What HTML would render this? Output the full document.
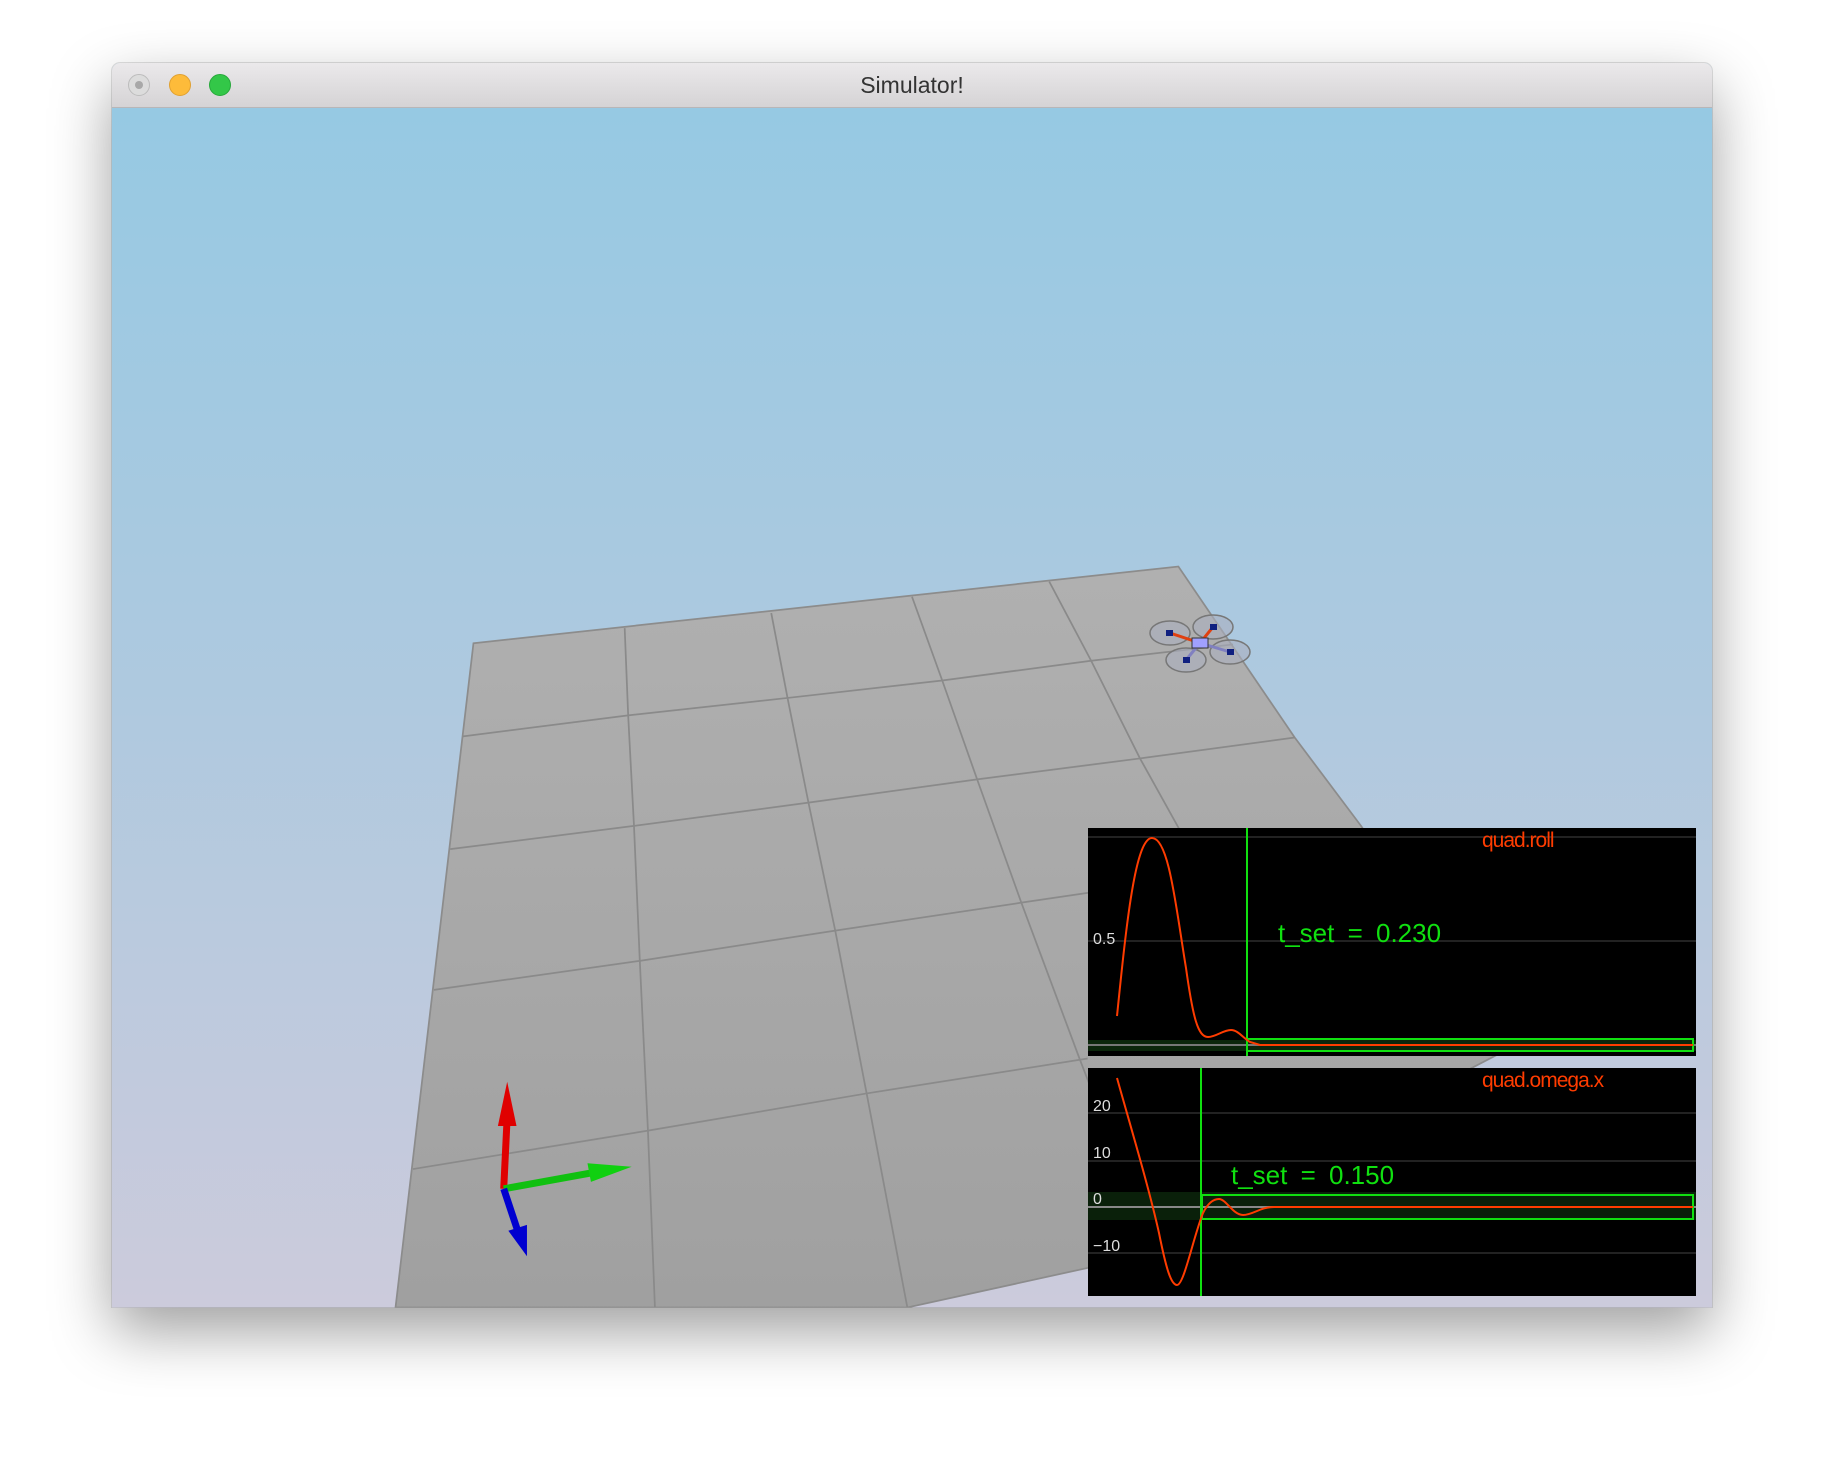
<!DOCTYPE html>
<html><head><meta charset="utf-8"><style>
html,body{margin:0;padding:0;width:1824px;height:1468px;background:#fff;overflow:hidden;font-family:"Liberation Sans",sans-serif}
.win{position:absolute;left:112px;top:63px;width:1600px;height:1244px;border-radius:8px 8px 0 0;box-shadow:0 24px 60px rgba(0,0,0,0.38),0 0 0 1px rgba(0,0,0,0.12);background:#9cc9e2;overflow:hidden}
.tb{position:absolute;left:0;top:0;width:1600px;height:44px;background:linear-gradient(#ebe9eb,#d5d3d5);border-bottom:1px solid #b8b6b8;text-align:center;line-height:44px;font-size:23px;color:#333}
.b{position:absolute;top:11px;width:22px;height:22px;border-radius:50%}
.chart{position:absolute;background:#000;width:608px;height:228px;overflow:hidden}
.t{position:absolute;font-family:"Liberation Sans",sans-serif;white-space:nowrap}
</style></head><body>
<div class="win"><div class="tb">Simulator!
<div class="b" style="left:16px;background:#dcdcdc;border:1px solid #bcbcbc;width:20px;height:20px"><div style="position:absolute;left:6px;top:6px;width:8px;height:8px;border-radius:50%;background:#a8a8a8"></div></div>
<div class="b" style="left:57px;background:#fdbb3a;border:1px solid #e0a030;width:20px;height:20px"></div>
<div class="b" style="left:97px;background:#33c748;border:1px solid #26a83a;width:20px;height:20px"></div>
</div></div>
<svg style="position:absolute;left:0;top:0" width="1824" height="1468" viewBox="0 0 1568 1262">
<defs>
<linearGradient id="sky" x1="0" y1="0" x2="0" y2="1"><stop offset="0" stop-color="#96c9e3"/><stop offset="0.5" stop-color="#afc9df"/><stop offset="1" stop-color="#cccbdc"/></linearGradient>
<linearGradient id="gr" x1="0" y1="0" x2="0" y2="1"><stop offset="0" stop-color="#b0b0b0"/><stop offset="1" stop-color="#a0a0a0"/></linearGradient>
<clipPath id="c"><rect x="96" y="93" width="1376" height="1031"/></clipPath>
</defs>
<g clip-path="url(#c)">
<rect x="96" y="93" width="1376" height="1031" fill="url(#sky)"/>
<polygon points="407,553 1013,487 1113,634 1170,710 1300,900 935,1090 780,1124 340,1124" fill="url(#gr)" stroke="#8c8c8c" stroke-width="1.5"/>
<g stroke="#8a8a8a" stroke-width="1.5" fill="none">
<polyline points="398,633 540,615 677,600 810,585 938,568 1060,554"/>
<polyline points="387,730 545,710 695,690 840,670 980,652 1113,634"/>
<polyline points="373,851 550,826 718,800 878,776 1000,758"/>
<polyline points="355,1005 557,972 745,940 935,910"/>
<polyline points="537,540 540,615 545,710 550,826 557,972 563,1124"/>
<polyline points="663,527 677,600 695,690 718,800 745,940 780,1124"/>
<polyline points="784,513 810,585 840,670 878,776 928,910 955,980"/>
<polyline points="902,500 938,568 980,652 1040,760"/>
</g>
<g stroke-linecap="butt">
<line x1="433" y1="1022" x2="436" y2="960" stroke="#e00000" stroke-width="6"/>
<polygon points="436,930 444,968 428,968" fill="#e00000"/>
<line x1="433" y1="1022" x2="510" y2="1008" stroke="#10c010" stroke-width="6"/>
<polygon points="543,1003 505,1000 508,1016" fill="#10d010"/>
<line x1="433" y1="1022" x2="445" y2="1058" stroke="#0000d0" stroke-width="6"/>
<polygon points="453,1080 437,1058 453,1053" fill="#0000d0"/>
</g>
</g>
</svg>
<svg style="position:absolute;left:1130px;top:590px" width="150" height="100" viewBox="1130 590 150 100">
<g fill="rgba(170,175,190,0.6)" stroke="#777" stroke-width="1.5">
<ellipse cx="1170" cy="633" rx="20" ry="12"/><ellipse cx="1213" cy="627" rx="20" ry="12"/>
<ellipse cx="1186" cy="660" rx="20" ry="12"/><ellipse cx="1230" cy="652" rx="20" ry="12"/>
</g>
<g stroke="#e04010" stroke-width="3"><line x1="1170" y1="633" x2="1200" y2="643"/><line x1="1213" y1="627" x2="1200" y2="643"/></g>
<g stroke="#8080c0" stroke-width="3"><line x1="1186" y1="660" x2="1200" y2="643"/><line x1="1230" y1="652" x2="1200" y2="643"/></g>
<rect x="1192" y="638" width="16" height="10" fill="#a0a0ff" stroke="#333"/>
<g fill="#102080"><rect x="1166" y="630" width="7" height="6"/><rect x="1210" y="624" width="7" height="6"/><rect x="1183" y="657" width="7" height="6"/><rect x="1227" y="649" width="7" height="6"/></g>
</svg>
<div class="chart" style="left:1088px;top:828px">
<svg width="608" height="228" style="position:absolute;left:0;top:0">
<line x1="0" y1="9" x2="608" y2="9" stroke="#222" stroke-width="2"/>
<line x1="0" y1="113" x2="608" y2="113" stroke="#222" stroke-width="2"/>
<rect x="0" y="212" width="608" height="11" fill="#0c260c"/>
<line x1="0" y1="217" x2="608" y2="217" stroke="#777" stroke-width="2"/>
<line x1="159" y1="0" x2="159" y2="228" stroke="#10e010" stroke-width="2"/>
<rect x="159" y="211" width="446" height="12" fill="none" stroke="#10e010" stroke-width="2"/>
<path d="M29,188 C38,100 47,10 64,10 C81,10 88,80 98,140 C105,190 110,209 120,209 C128,209 135,202 143,202 C150,202 155,210 162,214 L172,217 L605,217" fill="none" stroke="#ff3c00" stroke-width="2"/>
</svg>
<div class="t" style="left:394px;top:1px;font-size:21px;color:#ff3c00;letter-spacing:-1px">quad.roll</div>
<div class="t" style="left:5px;top:103px;font-size:16px;color:#ddd">0.5</div>
<div class="t" style="left:190px;top:90px;font-size:26px;color:#10e010;word-spacing:6px">t_set = 0.230</div>
</div>
<div class="chart" style="left:1088px;top:1068px">
<svg width="608" height="228" style="position:absolute;left:0;top:0">
<line x1="0" y1="45" x2="608" y2="45" stroke="#222" stroke-width="2"/>
<line x1="0" y1="93" x2="608" y2="93" stroke="#222" stroke-width="2"/>
<line x1="0" y1="185" x2="608" y2="185" stroke="#222" stroke-width="2"/>
<rect x="0" y="124" width="608" height="28" fill="#0a200a"/>
<line x1="0" y1="139" x2="608" y2="139" stroke="#888" stroke-width="2"/>
<line x1="113" y1="0" x2="113" y2="228" stroke="#10e010" stroke-width="2"/>
<rect x="114" y="127" width="491" height="24" fill="none" stroke="#10e010" stroke-width="2"/>
<path d="M29,10 C43,60 61,120 71,165 C78,200 83,217 89,217 C96,217 105,170 115,145 C120,135 125,131 131,131 C138,131 145,147 155,147 C165,147 172,139 186,139 L605,139" fill="none" stroke="#ff3c00" stroke-width="2"/>
</svg>
<div class="t" style="left:394px;top:1px;font-size:21px;color:#ff3c00;letter-spacing:-1px">quad.omega.x</div>
<div class="t" style="left:5px;top:30px;font-size:16px;color:#ddd">20</div>
<div class="t" style="left:5px;top:77px;font-size:16px;color:#ddd">10</div>
<div class="t" style="left:5px;top:123px;font-size:16px;color:#ddd">0</div>
<div class="t" style="left:5px;top:170px;font-size:16px;color:#ddd">−10</div>
<div class="t" style="left:143px;top:92px;font-size:26px;color:#10e010;word-spacing:6px">t_set = 0.150</div>
</div>
</body></html>
